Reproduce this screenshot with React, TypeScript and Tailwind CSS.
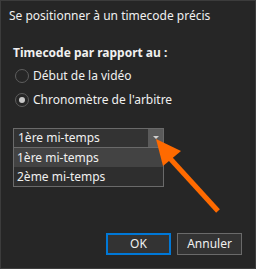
import React from 'react'

const font = { fontFamily: '"Noto Sans", "Open Sans", sans-serif' }

function Radio({ checked, label }: { checked?: boolean; label: string }) {
  return (
    <div className="flex items-center gap-[4px] h-[16px]">
      <div className="w-[14px] h-[14px] rounded-full border border-[#5e5e5e] bg-[#262626] flex items-center justify-center">
        {checked && <div className="w-[6px] h-[6px] rounded-full bg-[#c8c8c8]"></div>}
      </div>
      <span className="text-[12px] text-[#f0f0f0]">{label}</span>
    </div>
  )
}

export default function App() {
  return (
    <div
      className="relative w-[256px] h-[269px] bg-[#262626] border border-[#3c3c3c] flex flex-col overflow-hidden"
      style={font}
    >
      {/* Title */}
      <div className="h-[30px] pl-[8px] pt-[7px] text-[12px] text-[#f0f0f0] leading-[16px]">
        Se positionner à un timecode précis
      </div>

      <div className="pl-[12px] pt-[14px] flex flex-col">
        <p className="text-[12px] font-bold text-[#f0f0f0] leading-[16px]">Timecode par rapport au :</p>

        <div className="mt-[7px] pl-[2px] flex flex-col gap-[8px]">
          <Radio label="Début de la vidéo" />
          <Radio checked label="Chronomètre de l'arbitre" />
        </div>

        {/* Combobox */}
        <div className="mt-[20px] w-[151px] flex flex-col text-[12px] text-[#f0f0f0]">
          <div className="h-[20px] flex border border-[#6a6a6a] bg-[#333333]">
            <div className="flex-1 pl-[4px] leading-[18px]">1ère mi-temps</div>
            <div className="w-[15px] bg-[#5a5a5a] flex justify-center pt-[7px]">
              <div className="w-0 h-0 border-l-[3px] border-r-[3px] border-t-[3px] border-l-transparent border-r-transparent border-t-[#d0d0d0]"></div>
            </div>
          </div>
          <div className="border border-t-0 border-[#6a6a6a] bg-[#2e2e2e] flex flex-col">
            <div className="h-[19px] pl-[3px] leading-[19px] bg-[#434343]">1ère mi-temps</div>
            <div className="h-[19px] pl-[3px] leading-[19px]">2ème mi-temps</div>
          </div>
        </div>
      </div>

      {/* Buttons */}
      <div className="mt-auto mb-[13px] pr-[13px] flex justify-end gap-[6px] text-[12px] text-[#f0f0f0]">
        <button className="w-[65px] h-[22px] border-2 border-[#0078d7] bg-[#333333]">OK</button>
        <button className="w-[65px] h-[22px] border border-[#6a6a6a] bg-[#333333]">Annuler</button>
      </div>

      {/* Annotation arrow */}
      <svg className="absolute left-0 top-0" width="256" height="269" viewBox="0 0 256 269">
        <line x1="165" y1="153" x2="217" y2="210" stroke="#ff6a00" strokeWidth="5" />
        <polygon points="155,138 180,150 162,165" fill="#ff6a00" />
      </svg>
    </div>
  )
}
